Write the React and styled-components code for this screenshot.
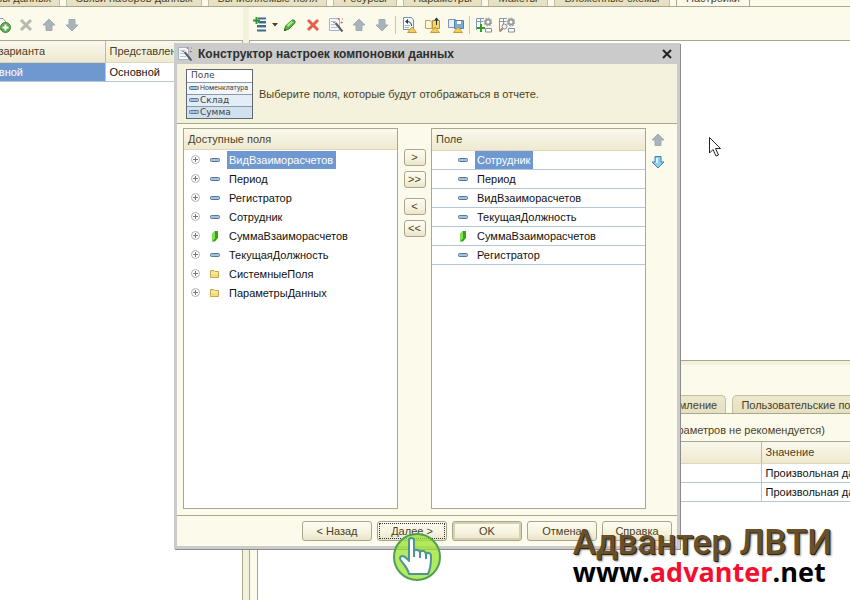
import styled, { createGlobalStyle, css } from "styled-components";

const colors = {
	cream: "#fcfaeb",
	beige: "#f4f1dc",
	line: "#aaa88c",
	rowLine: "#b4c6d8",
	label: "#4c3f1c",
	selected: "#6f98d0",
	frame: "#cbcbcb",
};

const GlobalStyle = createGlobalStyle`
    * {
        box-sizing: border-box;
    }

    body {
        margin: 0;
        overflow: hidden;
        background: ${colors.cream};
        color: ${colors.label};
        font: 11px/14px "Liberation Sans", Arial, sans-serif;
    }

    button {
        font: inherit;
        color: inherit;
        cursor: pointer;
    }

    svg {
        display: block;
        flex: none;
    }
`;

/* ---------- shared parts ---------- */

const Page = styled.div`
    position: relative;
    display: flex;
    flex-direction: column;
    height: 100vh;
    overflow: hidden;
`;

const ClipLeft = styled.div`
    display: flex;
    justify-content: flex-end;
    overflow: hidden;
    width: ${({ $width }) => $width}px;
    flex: none;
    white-space: nowrap;
`;

const TabList = styled.div`
    display: flex;
    align-items: flex-end;
    gap: 6px;
    flex: none;
    height: ${({ $height }) => $height}px;
    overflow: hidden;
    border-bottom: 1px solid ${colors.line};
`;

const Tab = styled.button`
    flex: none;
    width: ${({ $width }) => $width}px;
    height: 18px;
    padding: 0;
    border: 1px solid #c3bf9f;
    border-bottom: 0;
    border-radius: 5px 5px 0 0;
    background: linear-gradient(#ece8cf, #e6e0c2);
    white-space: nowrap;
    overflow: hidden;

    ${({ $active }) => $active && css`
        background: ${colors.cream};
        border-color: ${colors.line};
    `}
`;

const Toolbar = styled.div`
    display: flex;
    align-items: center;
    height: 33px;
    flex: none;
    padding-top: 3px;
`;

const ToolButton = styled.button`
    display: flex;
    align-items: center;
    justify-content: center;
    flex: none;
    width: ${({ $width }) => $width || 23}px;
    height: 22px;
    padding: 0;
    border: 0;
    background: none;
`;

const ToolSeparator = styled.span`
    width: 1px;
    height: 18px;
    margin: 0 2px;
    background: #c9c6ae;
`;

const Grid = styled.table`
    width: 100%;
    border-collapse: collapse;
    table-layout: fixed;
    background: #fff;
    color: #111;

    th,
    td {
        padding: 0 0 0 4px;
        text-align: left;
        font-weight: normal;
        white-space: nowrap;
        overflow: hidden;
    }

    th {
        height: 21px;
        color: ${colors.label};
        background: linear-gradient(#faf8ee, #efe9cf);
        border-bottom: 1px solid #dcd7b8;
    }

    th + th {
        border-left: 1px solid #bdb99b;
    }

    td {
        height: 19px;
        border-bottom: 1px solid ${colors.rowLine};
    }

    td + td {
        border-left: 1px solid ${colors.rowLine};
    }
`;

/* ---------- background window ---------- */

const Workspace = styled.div`
    display: flex;
    flex: 1;
    min-height: 0;
`;

const VariantsPane = styled.section`
    width: 243px;
    flex: none;
    display: flex;
    flex-direction: column;
`;

const White = styled.div`
    flex: 1;
    min-height: 0;
    background: #fff;
    overflow: hidden;
    border-top: 1px solid ${colors.line};
`;

const VariantsBox = styled(White)`
    border-right: 1px solid ${colors.line};
`;

const VariantsGrid = styled(Grid)`
    th:first-child,
    td:first-child {
        padding: 0;
    }

    td:first-child {
        color: #fff;
        background: ${colors.selected};
    }
`;

const Splitter = styled.div`
    width: 6px;
    flex: none;
    background: ${colors.beige};
`;

const SettingsPane = styled.section`
    flex: 1;
    min-width: 0;
    display: flex;
    flex-direction: column;
`;

const Structure = styled(White)`
    flex: none;
    height: 321px;
    border-bottom: 1px solid ${colors.line};
    border-left: 1px solid ${colors.line};
`;

const Details = styled.div`
    flex: 1;
    min-height: 0;
    display: flex;
    flex-direction: column;
    padding: 4px 0 0 7px;
    border-left: 1px solid ${colors.line};
    background: linear-gradient(${colors.beige} 4px, ${colors.cream} 4px);
`;

const Note = styled.div`
    width: 568px;
    flex: none;
    padding: 9px 0 4px;
    text-align: right;
    white-space: nowrap;
`;

const ParametersBox = styled(White)`
    border-left: 1px solid ${colors.line};
`;

/* ---------- dialog ---------- */

const Dialog = styled.div`
    position: absolute;
    inset: 43px 170px 51px 174px;
    display: flex;
    flex-direction: column;
    background: ${colors.cream};
    border: 3px solid ${colors.frame};
    border-top: 0;
    box-shadow: 1px 1px 0 #8b8b8b;
`;

const TitleBar = styled.header`
    display: flex;
    align-items: center;
    gap: 5px;
    height: 21px;
    flex: none;
    padding: 1px 2px 0 0;
    background: ${colors.frame};
    color: #2e2e2e;
`;

const Title = styled.h1`
    flex: 1;
    margin: 0;
    font-size: 12px;
    line-height: 16px;
    font-weight: bold;
    white-space: nowrap;
`;

const Banner = styled.div`
    display: flex;
    align-items: center;
    gap: 6px;
    height: 60px;
    flex: none;
    padding-left: 9px;
    background: ${colors.beige};
    border-bottom: 1px solid ${colors.line};
`;

const Preview = styled.div`
    width: 67px;
    border: 1px solid #5f6a70;
    background: #fff;
    color: #444;
    font: 9px/11px "DejaVu Sans", sans-serif;
`;

const PreviewRow = styled.div`
    display: flex;
    align-items: center;
    gap: 1px;
    height: 12px;
    padding-left: ${({ $head }) => ($head ? 4 : 2)}px;
    white-space: nowrap;
    background: ${({ $color }) => $color};
    ${({ $head }) => !$head && "border-top: 1px solid #8d9aa3;"}
    ${({ $narrow }) => $narrow && "font-family: Roboto, sans-serif; font-size: 7px;"}
`;

const Body = styled.div`
    display: flex;
    flex: 1;
    min-height: 0;
    padding: 4px 0 6px 6px;
`;

const ListBox = styled.div`
    flex: 1;
    min-width: 0;
    overflow: hidden;
    background: #fff;
    border: 1px solid ${colors.line};
`;

const ListHeader = styled.div`
    height: 21px;
    padding: 3px 4px;
    background: linear-gradient(#faf8ee, #efe9cf);
    border-bottom: 1px solid #dcd7b8;
`;

const Tree = styled.ul`
    margin: 0;
    padding: 0;
    list-style: none;
    color: #111;
`;

const TreeItem = styled.li`
    display: flex;
    align-items: center;
    gap: 7px;
    height: 19px;
    padding-left: 7px;
`;

const Field = styled.span`
    display: flex;
    align-items: center;
    gap: 4px;
    height: 18px;
`;

const FieldName = styled.span`
    padding: 2px 3px 2px 2px;
    line-height: 14px;
    ${({ $selected }) => $selected && css`
        color: #fff;
        background: ${colors.selected};
    `}
`;

const ChosenGrid = styled(Grid)`
    td {
        padding-left: 23px;
    }
`;

const MoveColumn = styled.div`
    display: flex;
    flex-direction: column;
    align-items: center;
    gap: 5px;
    width: 33px;
    flex: none;
    padding-top: 21px;
`;

const OrderColumn = styled(MoveColumn)`
    width: 31px;
    gap: 0;
    padding: 1px 7px 0 0;
`;

const pushButton = css`
    padding: 0;
    border: 1px solid #a9a68c;
    border-radius: 3px;
    background: linear-gradient(#fdfcf3, #f6f2de 60%, #e9e4c8);
`;

const MoveButton = styled.button`
    ${pushButton}
    width: 22px;
    height: 17px;
    line-height: 13px;

    &:nth-child(3) {
        margin-top: 5px;
    }
`;

const Footer = styled.footer`
    display: flex;
    justify-content: flex-end;
    gap: 5px;
    flex: none;
    padding: 5px;
    border-top: 1px solid ${colors.line};
`;

const PushButton = styled.button`
    ${pushButton}
    width: 70px;
    height: 20px;
    ${({ $focused }) => $focused && css`
        outline: 1px dotted #333;
        outline-offset: -3px;
    `}
    ${({ $primary }) => $primary && "box-shadow: inset 0 0 0 2px #d6d1ae;"}
`;

/* ---------- overlays ---------- */

const Pointer = styled.svg`
    position: absolute;
    left: 708px;
    top: 136px;
`;

const ClickMark = styled.svg`
    position: absolute;
    left: 392px;
    top: 532px;
    pointer-events: none;
`;

const Watermark = styled.div`
    position: absolute;
    right: 18px;
    bottom: 14px;
    pointer-events: none;
    white-space: nowrap;
`;

const BrandName = styled.div`
    font: 500 35px/30px Roboto, sans-serif;
    color: #67502a;
    text-shadow: 1px 1px 0 #33260f, 2px 2px 2px #999;
`;

const BrandUrl = styled.a`
    display: block;
    color: #000;
    font: bold 27px/28px "Open Sans", sans-serif;
    text-decoration: none;

    em {
        font-style: normal;
        color: #f3102e;
    }
`;

/* ---------- icons ---------- */

const Svg = ({ size = 16, children }) => (
	<svg width={size} height={size} viewBox={`0 0 ${size} ${size}`} fill="none" aria-hidden="true">
		{children}
	</svg>
);

const ArrowIcon = ({ down, blue }) => (
	<Svg>
		<path
			d="M8 2 L14 8 H11 V13.5 H5 V8 H2 Z"
			transform={down ? "rotate(180 8 8)" : undefined}
			fill={blue ? "#8fcdf0" : "#a9b3ba"}
			stroke={blue ? "#3d7fae" : "#a0abb3"}
		/>
		{blue && <path d="M6 4 H8 V9 H6 Z" fill="#d9f1fc"/>}
	</Svg>
);

const CrossIcon = ({ color }) => (
	<Svg>
		<path d="M3 3 L13 13 M13 3 L3 13" stroke={color} strokeWidth="3"/>
	</Svg>
);

const AddCopyIcon = () => (
	<Svg>
		<path d="M1.5 1.5 H8 L11 5 V12.5 H1.5 Z" fill="#fff" stroke="#93a0a8"/>
		<circle cx="10.5" cy="10.5" r="5" fill="#5fae4f" stroke="#3f8a37"/>
		<path d="M10.5 7.5 V13.5 M7.5 10.5 H13.5" stroke="#fff" strokeWidth="2"/>
	</Svg>
);

const AddItemIcon = () => (
	<Svg>
		<path d="M5 1.5 H13 M5 5 H13 M4 9 H13 M4 13.5 H13" stroke="#46698a" strokeWidth="2"/>
		<path d="M6 2.5 H13 M6 6.5 H13 M4 10.5 H13" stroke="#9fbdd2"/>
		<path d="M3.5 0 V7 M0 3.5 H7" stroke="#2f9a2c" strokeWidth="2"/>
	</Svg>
);

const CaretIcon = () => (
	<svg width="6" height="4" viewBox="0 0 6 4" aria-hidden="true">
		<path d="M0 0 H6 L3 3.5 Z" fill="#5a3c10"/>
	</svg>
);

const PencilIcon = () => (
	<Svg>
		<path d="M2.5 13.5 L3.5 9 L9.5 3.5 Q11 2 12.5 3.5 Q14 5 12.5 6.5 L7 12 Z" fill="#55b83a" stroke="#2c8d22"/>
		<path d="M5.5 9 L10.5 4.5" stroke="#b5ea94" strokeWidth="2"/>
		<path d="M2 14 L2.5 11.5 L4.5 13.5 Z" fill="#33481f"/>
	</Svg>
);

const WandIcon = () => (
	<Svg>
		<path d="M1.5 1.5 H11.5 V13.5 H1.5 Z" fill="#f5f8fa" stroke="#a3b6c5"/>
		<path d="M3 4.5 H8 M3 7.5 H7 M3 10.5 H9" stroke="#b4c4d0"/>
		<path d="M7.5 6 L14.5 14.5" stroke="#5a6067" strokeWidth="2"/>
		<path d="M10.5 1 V3 M9.5 2 H11.5 M12.5 5.5 H15 M13.5 4.5 V6.5 M14 2 H15 M5 5.5 H7" stroke="#e07070"/>
	</Svg>
);

const Triangle = () => (
	<path d="M10 10 L14.5 15.5 H5.5 Z" fill="#f3cd5c" stroke="#c39a35"/>
);

const ResetIcon = () => (
	<Svg>
		<path d="M1.5 0.5 H9.5 L11.5 3 V12.5 H1.5 Z" fill="#f7fafc" stroke="#7590a8"/>
		<path d="M3 8.5 H8 M3 10.5 H7" stroke="#9fb4c4"/>
		<path d="M3 4.5 L6 2 V7 Z" fill="#27374b"/>
		<path d="M5 4.5 Q9.5 4.5 9.5 9" stroke="#27374b"/>
		<Triangle/>
	</Svg>
);

const LoadIcon = () => (
	<Svg>
		<path d="M0.5 3.5 H5 L7 5 V11.5 H0.5 Z" fill="#fff7d1" stroke="#c3a350"/>
		<path d="M7.5 3.5 H14.5 V11.5 H7.5 Z" fill="#f4d471" stroke="#b2943e"/>
		<path d="M11.5 8 V2" stroke="#26343f" strokeWidth="1"/>
		<path d="M9 3.5 L11.5 0.5 L14 3.5 Z" fill="#26343f"/>
		<Triangle/>
	</Svg>
);

const SaveIcon = () => (
	<Svg>
		<path d="M0.5 2.5 H7.5 V10.5 H0.5 Z" fill="#e8f0f7" stroke="#7b95ad"/>
		<path d="M6.5 3.5 H15.5 V11.5 H6.5 Z" fill="#7ea9d0" stroke="#5680a8"/>
		<path d="M9 4 H13 V7 H9 Z" fill="#fff"/>
		<Triangle/>
	</Svg>
);

const GridGear = ({ children }) => (
	<Svg>
		<path d="M0.5 13 V1.5 H8 M0.5 4.5 H7 M4.5 1.5 V9" stroke="#8398a8"/>
		<circle cx="12" cy="5" r="2.5" fill="#fff" stroke="#9a9da0" strokeWidth="2"/>
		<circle cx="12" cy="5" r="4" stroke="#9a9da0" strokeWidth="1" strokeDasharray="2 1"/>
		<path d="M9.5 11.5 H15.5 V15 H9.5 Z" fill="#fff" stroke="#7d8f9c"/>
		{children}
	</Svg>
);

const GridAddIcon = () => (
	<GridGear>
		<path d="M5 7 V15 M1 11 H9" stroke="#2f9a2c" strokeWidth="2"/>
	</GridGear>
);

const GridFindIcon = () => (
	<GridGear>
		<circle cx="5.5" cy="9.5" r="2.5" fill="#eef3f6" stroke="#8b8b8b"/>
		<path d="M3.5 11.5 L0.5 14.5" stroke="#b07a70" strokeWidth="2"/>
	</GridGear>
);

const DashIcon = ({ small }) => (
	<svg width={small ? 10 : 16} height={small ? 8 : 16} viewBox={small ? "3 4 10 8" : "0 0 16 16"} aria-hidden="true">
		<rect x="3.5" y="6.5" width="9" height="3" rx="1" fill="#a5c2da" stroke="#55779a"/>
	</svg>
);

const ResourceIcon = () => (
	<Svg>
		<path d="M5 6 L8 3 H11 V10 L8 13.5 H5 Z" fill="#35a51c"/>
		<path d="M5 6 L8 3 V10.5 L5 13.5 Z" fill="#7fe04f"/>
	</Svg>
);

const FolderIcon = () => (
	<Svg>
		<path d="M3.5 4.5 H7 L8 5.5 H11.5 V11.5 H3.5 Z" fill="#f3dd83" stroke="#c5a84c"/>
		<path d="M4 7 H11" stroke="#fff3bd"/>
	</Svg>
);

const ExpandIcon = () => (
	<Svg size={9}>
		<circle cx="4.5" cy="4.5" r="4" stroke="#b0b0b0"/>
		<path d="M2 4.5 H7 M4.5 2 V7" stroke="#777"/>
	</Svg>
);

const fieldIcons = {
	field: DashIcon,
	resource: ResourceIcon,
	folder: FolderIcon,
};

/* ---------- data ---------- */

const schemaTabs = [
	["Связи наборов данных", 136],
	["Вычисляемые поля", 119],
	["Ресурсы", 64],
	["Параметры", 79],
	["Макеты", 60],
	["Вложенные схемы", 116],
	["Настройки", 74],
];

const settingTabs = [
	["Параметры", 79],
	["Выбранные поля", 97],
	["Отбор", 54],
	["Сортировка", 80],
	["Условное оформление", 135],
	["Пользовательские поля", 140],
];

const availableFields = [
	["ВидВзаиморасчетов", "field"],
	["Период", "field"],
	["Регистратор", "field"],
	["Сотрудник", "field"],
	["СуммаВзаиморасчетов", "resource"],
	["ТекущаяДолжность", "field"],
	["СистемныеПоля", "folder"],
	["ПараметрыДанных", "folder"],
];

const chosenFields = [
	["Сотрудник", "field"],
	["Период", "field"],
	["ВидВзаиморасчетов", "field"],
	["ТекущаяДолжность", "field"],
	["СуммаВзаиморасчетов", "resource"],
	["Регистратор", "field"],
];

const moves = [
	[">", "Добавить"],
	[">>", "Добавить все"],
	["<", "Удалить"],
	["<<", "Удалить все"],
];

/* ---------- views ---------- */

const FieldLabel = ({ name, type, selected }) => {
	const Icon = fieldIcons[type];

	return (
		<Field>
			<Icon/>
			<FieldName $selected={selected}>{name}</FieldName>
		</Field>
	);
};

const Variants = () => (
	<VariantsPane>
		<Toolbar>
			<ClipLeft $width={14}>
				<ToolButton aria-label="Добавить вариант"><AddCopyIcon/></ToolButton>
			</ClipLeft>
			<ToolButton aria-label="Удалить"><CrossIcon color="#b9b9b1"/></ToolButton>
			<ToolButton aria-label="Вверх"><ArrowIcon/></ToolButton>
			<ToolButton aria-label="Вниз"><ArrowIcon down/></ToolButton>
		</Toolbar>
		<VariantsBox>
			<VariantsGrid>
				<colgroup>
					<col width="105"/>
					<col/>
				</colgroup>
				<thead>
					<tr>
						<th><ClipLeft $width={45}>Имя варианта</ClipLeft></th>
						<th>Представление</th>
					</tr>
				</thead>
				<tbody>
					<tr>
						<td><ClipLeft $width={23}>Основной</ClipLeft></td>
						<td>Основной</td>
					</tr>
				</tbody>
			</VariantsGrid>
		</VariantsBox>
	</VariantsPane>
);

const Settings = () => (
	<SettingsPane>
		<Toolbar>
			<ToolButton aria-label="Добавить"><AddItemIcon/></ToolButton>
			<ToolButton $width={6} aria-label="Ещё"><CaretIcon/></ToolButton>
			<ToolButton aria-label="Изменить"><PencilIcon/></ToolButton>
			<ToolButton aria-label="Удалить"><CrossIcon color="#e2614f"/></ToolButton>
			<ToolButton aria-label="Конструктор"><WandIcon/></ToolButton>
			<ToolButton aria-label="Вверх"><ArrowIcon/></ToolButton>
			<ToolButton aria-label="Вниз"><ArrowIcon down/></ToolButton>
			<ToolSeparator/>
			<ToolButton aria-label="Стандартные настройки"><ResetIcon/></ToolButton>
			<ToolButton aria-label="Загрузить"><LoadIcon/></ToolButton>
			<ToolButton aria-label="Сохранить"><SaveIcon/></ToolButton>
			<ToolSeparator/>
			<ToolButton aria-label="Добавить настройку"><GridAddIcon/></ToolButton>
			<ToolButton aria-label="Найти настройку"><GridFindIcon/></ToolButton>
		</Toolbar>
		<Structure/>
		<Details>
			<TabList $height={49}>
				{settingTabs.map(([name, width]) => (
					<Tab key={name} $width={width}>{name}</Tab>
				))}
			</TabList>
			<Note>(изменение состава параметров не рекомендуется)</Note>
			<ParametersBox>
				<Grid>
					<colgroup>
						<col width="503"/>
						<col/>
					</colgroup>
					<thead>
						<tr>
							<th>Параметр</th>
							<th>Значение</th>
						</tr>
					</thead>
					<tbody>
						<tr>
							<td>Начало периода</td>
							<td>Произвольная дата</td>
						</tr>
						<tr>
							<td>Конец периода</td>
							<td>Произвольная дата</td>
						</tr>
					</tbody>
				</Grid>
			</ParametersBox>
		</Details>
	</SettingsPane>
);

const Wizard = () => (
	<Dialog role="dialog" aria-labelledby="wizard-title">
		<TitleBar>
			<WandIcon/>
			<Title id="wizard-title">Конструктор настроек компоновки данных</Title>
			<ToolButton $width={16} aria-label="Закрыть">
				<Svg>
					<path d="M4 4 L12 12 M12 4 L4 12" stroke="#222" strokeWidth="2"/>
				</Svg>
			</ToolButton>
		</TitleBar>
		<Banner>
			<Preview>
				<PreviewRow $head>Поле</PreviewRow>
				<PreviewRow $color="#f1f6fa" $narrow><DashIcon small/>Номенклатура</PreviewRow>
				<PreviewRow $color="#e2edf5"><DashIcon small/>Склад</PreviewRow>
				<PreviewRow $color="#cfe0ee"><DashIcon small/>Сумма</PreviewRow>
			</Preview>
			<span>Выберите поля, которые будут отображаться в отчете.</span>
		</Banner>
		<Body>
			<ListBox>
				<ListHeader>Доступные поля</ListHeader>
				<Tree>
					{availableFields.map(([name, type], i) => (
						<TreeItem key={name}>
							<ExpandIcon/>
							<FieldLabel name={name} type={type} selected={i === 0}/>
						</TreeItem>
					))}
				</Tree>
			</ListBox>
			<MoveColumn>
				{moves.map(([sign, label]) => (
					<MoveButton key={sign} aria-label={label}>{sign}</MoveButton>
				))}
			</MoveColumn>
			<ListBox>
				<ChosenGrid>
					<thead>
						<tr>
							<th>Поле</th>
						</tr>
					</thead>
					<tbody>
						{chosenFields.map(([name, type], i) => (
							<tr key={name}>
								<td><FieldLabel name={name} type={type} selected={i === 0}/></td>
							</tr>
						))}
					</tbody>
				</ChosenGrid>
			</ListBox>
			<OrderColumn>
				<ToolButton aria-label="Вверх"><ArrowIcon/></ToolButton>
				<ToolButton aria-label="Вниз"><ArrowIcon down blue/></ToolButton>
			</OrderColumn>
		</Body>
		<Footer>
			<PushButton>&lt; Назад</PushButton>
			<PushButton $focused>Далее &gt;</PushButton>
			<PushButton $primary>OK</PushButton>
			<PushButton>Отмена</PushButton>
			<PushButton>Справка</PushButton>
		</Footer>
	</Dialog>
);

const App = () => (
	<Page>
		<GlobalStyle/>
		<TabList $height={7}>
			<ClipLeft $width={60}>
				<Tab $width={99}>Наборы данных</Tab>
			</ClipLeft>
			{schemaTabs.map(([name, width]) => (
				<Tab key={name} $width={width} $active={name === "Настройки"}>{name}</Tab>
			))}
		</TabList>
		<Workspace>
			<Variants/>
			<Splitter/>
			<Settings/>
		</Workspace>
		<Wizard/>
		<Pointer width="14" height="22" viewBox="0 0 14 22" aria-hidden="true">
			<path d="M1.5 1.5 V17 L5 13.5 L8 20 L10.5 19 L7.5 12.5 H12.5 Z" fill="#fff" stroke="#222"/>
		</Pointer>
		<ClickMark width="50" height="50" viewBox="0 0 50 50" aria-hidden="true">
			<circle cx="25" cy="25" r="23" fill="#9be22d" fillOpacity="0.75" stroke="#4f9f55" strokeWidth="2"/>
			<path
				d="M17 42 Q16 37 10 30 Q6 25 10 24 Q13 24 17 29 V9 Q17 6 19.5 6 Q22 6 22 9 V21 Q22 17 25 18 Q28 18 28 22 Q28 18 31 19 Q34 19 34 24 Q34 20 36.5 21 Q39 21 39 25 Q39 36 36 42 Z"
				fill="#fff"
				stroke="#4d9593"
				strokeWidth="2"
				strokeLinejoin="round"
			/>
			<path d="M22 20 V25 M28 21 V26 M34 23 V27" stroke="#4d9593" strokeWidth="2"/>
		</ClickMark>
		<Watermark>
			<BrandName>Адвантер ЛВТИ</BrandName>
			<BrandUrl href="#advanter">www.<em>advanter</em>.net</BrandUrl>
		</Watermark>
	</Page>
);

export default App;
